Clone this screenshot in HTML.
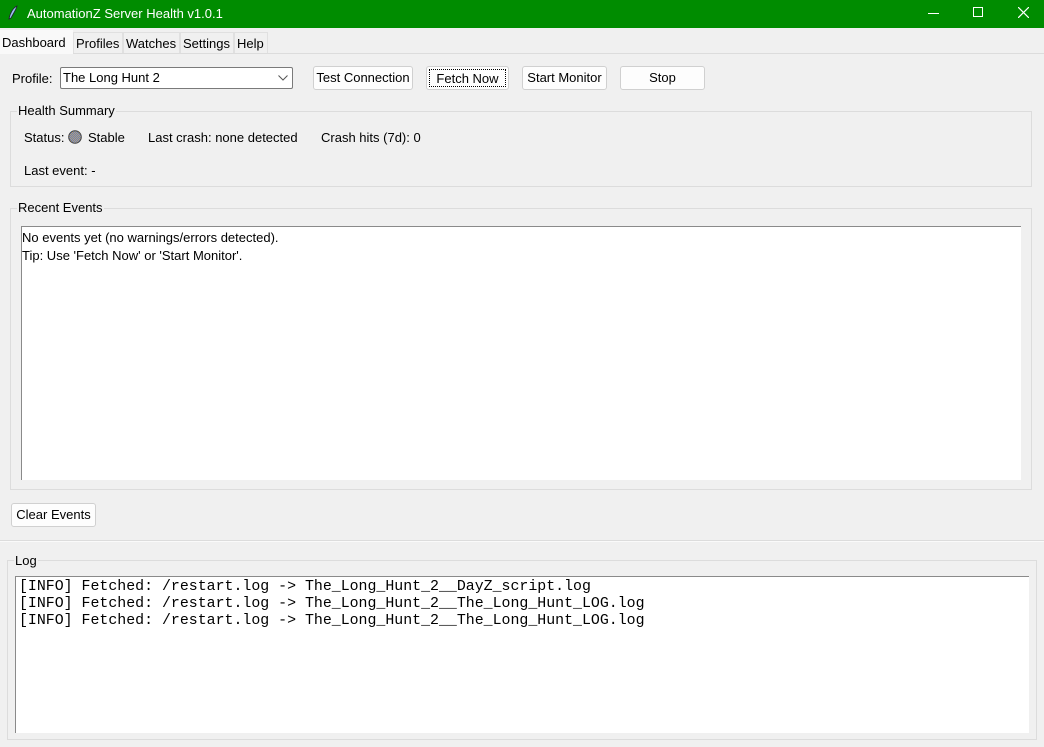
<!DOCTYPE html>
<html><head><style>
*{margin:0;padding:0;box-sizing:border-box}
body{width:1044px;height:747px;background:#f0f0f0;font-family:"Liberation Sans",sans-serif;font-size:13px;color:#000;position:relative;overflow:hidden}
.a{position:absolute;white-space:nowrap}
.btn{position:absolute;background:#fdfdfd;border:1px solid #d0d0d0;border-radius:3px;text-align:center;line-height:22px}
.frame{position:absolute;border:1px solid #dcdcdc}
.lbl{position:absolute;background:#f0f0f0;padding:0 1px;line-height:14px}
.tab{position:absolute;top:32px;height:21px;border:1px solid #e0e0e0;border-bottom:none;background:#f0f0f0;line-height:22px;padding-left:2px;font-size:13px;overflow:hidden}
.mono{font-family:"Liberation Mono",monospace;font-size:14.9px;line-height:17px}
</style></head><body>
<div class="a" style="left:0;top:0;width:1044px;height:28px;background:#008c00"></div>
<svg class="a" style="left:7px;top:5px" width="12" height="16" viewBox="0 0 12 16"><path d="M10 1 C6 3 3 8 2 14 L4 13 C6 9 9 5 10 1Z" fill="#9cc3f0" stroke="#223" stroke-width="0.8"/></svg>
<div class="a" style="left:27px;top:6px;color:#fff;font-size:13px">AutomationZ Server Health v1.0.1</div>
<div class="a" style="left:928px;top:13px;width:11px;height:1px;background:#fff"></div>
<div class="a" style="left:973px;top:7px;width:10px;height:10px;border:1px solid #fff"></div>
<svg class="a" style="left:1018px;top:7px" width="11" height="11"><path d="M0 0L11 11M11 0L0 11" stroke="#fff" stroke-width="1.2"/></svg>
<div class="a" style="left:0;top:53px;width:1044px;height:1px;background:#dcdcdc"></div>
<div class="tab" style="left:0;top:30px;width:73px;height:24px;background:#f9f9f9;line-height:26px;border:none">Dashboard</div>
<div class="tab" style="left:73px;width:50px">Profiles</div>
<div class="tab" style="left:123px;width:57px">Watches</div>
<div class="tab" style="left:180px;width:54px">Settings</div>
<div class="tab" style="left:234px;width:34px">Help</div>
<div class="a" style="left:12px;top:71px">Profile:</div>
<div class="a" style="left:60px;top:67px;width:233px;height:22px;background:#fff;border:1px solid #7a7a7a;border-radius:2px;padding-left:2px;line-height:20px">The Long Hunt 2</div>
<svg class="a" style="left:278px;top:75px" width="10" height="6"><path d="M0.5 0.5L5 5L9.5 0.5" stroke="#555" fill="none"/></svg>
<div class="btn" style="left:313px;top:66px;width:100px;height:24px">Test Connection</div>
<div class="btn" style="left:426px;top:66px;width:83px;height:24px"><div style="position:absolute;left:2px;top:2px;right:2px;bottom:2px;border:1px dotted #000;line-height:18px">Fetch Now</div></div>
<div class="btn" style="left:522px;top:66px;width:85px;height:24px">Start Monitor</div>
<div class="btn" style="left:620px;top:66px;width:85px;height:24px">Stop</div>
<div class="frame" style="left:10px;top:111px;width:1022px;height:76px"></div>
<div class="lbl" style="left:17px;top:104px">Health Summary</div>
<div class="a" style="left:24px;top:130px">Status:</div>
<svg class="a" style="left:68px;top:130px" width="14" height="14"><defs><pattern id="p" width="2" height="2" patternUnits="userSpaceOnUse"><rect width="2" height="2" fill="#5f7fc0"/><rect width="1" height="1" fill="#c0a070"/><rect x="1" y="1" width="1" height="1" fill="#c0a070"/></pattern></defs><circle cx="7" cy="7" r="6.3" fill="url(#p)" stroke="#444"/></svg>
<div class="a" style="left:88px;top:130px">Stable</div>
<div class="a" style="left:148px;top:130px">Last crash: none detected</div>
<div class="a" style="left:321px;top:130px">Crash hits (7d): 0</div>
<div class="a" style="left:24px;top:163px">Last event: -</div>
<div class="frame" style="left:10px;top:208px;width:1022px;height:282px"></div>
<div class="lbl" style="left:17px;top:201px">Recent Events</div>
<div class="a" style="left:21px;top:226px;width:1000px;height:254px;background:#fff;border-left:1px solid #8a8a8a;border-top:1px solid #8a8a8a;padding:2px 0 0 0;line-height:18px">No events yet (no warnings/errors detected).<br>Tip: Use 'Fetch Now' or 'Start Monitor'.</div>
<div class="btn" style="left:11px;top:503px;width:85px;height:24px">Clear Events</div>
<div class="a" style="left:0;top:540px;width:1044px;height:1px;background:#dcdcdc"></div>
<div class="a" style="left:0;top:541px;width:1044px;height:1px;background:#fafafa"></div>
<div class="frame" style="left:7px;top:560px;width:1030px;height:180px"></div>
<div class="lbl" style="left:14px;top:554px">Log</div>
<div class="a mono" style="left:15px;top:576px;width:1014px;height:157px;background:#fff;border-top:1px solid #8a8a8a;border-left:1px solid #8a8a8a;padding:2px 0 0 3px">[INFO] Fetched: /restart.log -&gt; The_Long_Hunt_2__DayZ_script.log<br>[INFO] Fetched: /restart.log -&gt; The_Long_Hunt_2__The_Long_Hunt_LOG.log<br>[INFO] Fetched: /restart.log -&gt; The_Long_Hunt_2__The_Long_Hunt_LOG.log</div>
</body></html>
